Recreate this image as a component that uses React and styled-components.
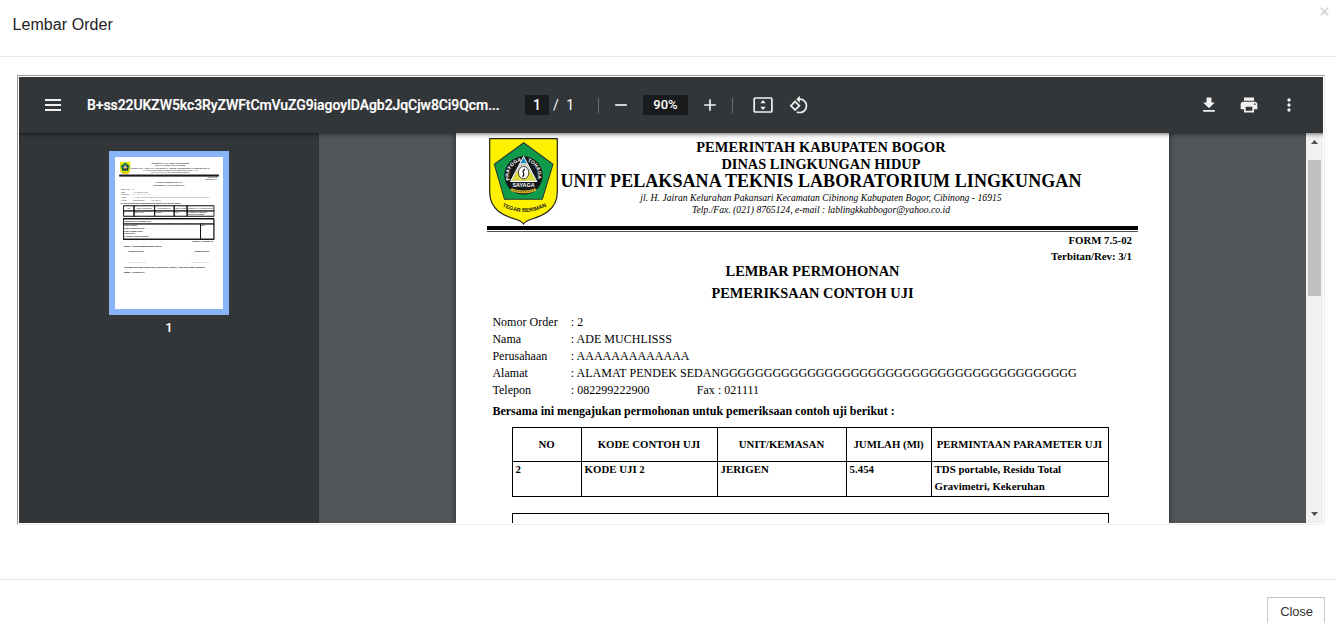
import React from "react";
import styled, { createGlobalStyle, css } from "styled-components";

const GlobalStyle = createGlobalStyle`
  * { box-sizing: border-box; }
  html, body { margin: 0; padding: 0; height: 100%; overflow: hidden; background: #fff; }
  #root { height: 100%; }
`;

/* ---------- modal ---------- */
const Modal = styled.div`
  height: 623px;
  overflow: hidden;
  display: flex;
  flex-direction: column;
  background: #fff;
  font-family: "Liberation Sans", Arial, sans-serif;
`;
const ModalHeader = styled.header`
  flex: none;
  height: 57px;
  border-bottom: 1px solid #eaeaea;
  display: flex;
  justify-content: space-between;
  padding: 0 7px 0 12.6px;
`;
const ModalTitle = styled.h4`
  margin: 0;
  font: 400 16px/49px "Liberation Sans", Arial, sans-serif;
  color: #222;
  letter-spacing: 0.05px;
`;
const Dismiss = styled.button`
  border: 0;
  padding: 0;
  background: none;
  height: 22px;
  line-height: 0;
`;
const ModalBody = styled.main`
  flex: none;
  height: 522px;
  padding: 18px 11px 0 17px;
`;
const Frame = styled.div`
  height: 450px;
  border: 1px solid;
  border-color: #9a9a9a #ededed #ededed #9a9a9a;
  padding: 1px;
  display: flex;
  flex-direction: column;
  background: #fff;
`;
const ModalFooter = styled.footer`
  flex: none;
  height: 60px;
  border-top: 1px solid #e2e2e2;
  padding: 17px 11px 0;
  display: flex;
  justify-content: flex-end;
`;
const CloseButton = styled.button`
  width: 58px;
  height: 34px;
  border: 1px solid #c6c6c6;
  background: #fff;
  color: #333;
  font: 13px/16px "Liberation Sans", Arial, sans-serif;
  padding: 0 0 4px 1px;
  letter-spacing: -0.1px;
`;

/* ---------- viewer toolbar ---------- */
const Toolbar = styled.div`
  flex: none;
  height: 56px;
  background: #323639;
  color: #f1f1f1;
  display: flex;
  align-items: center;
  padding: 0 24px 0 24px;
  font: 500 14px/20px Roboto, sans-serif;
`;
const ToolbarShade = styled.div`
  position: absolute;
  top: 0;
  left: 0;
  right: 0;
  height: 6px;
  background: linear-gradient(rgba(0, 0, 0, 0.38), rgba(0, 0, 0, 0.1) 50%, transparent);
`;
const Icon = styled.svg`
  display: block;
  flex: none;
  width: 20px;
  height: 20px;
  fill: #f1f1f1;
  margin-left: ${(p) => p.$gap || 0}px;
`;
const FileName = styled.span`
  width: 414px;
  margin-left: 24px;
  color: #fff;
  white-space: nowrap;
  font-weight: 500;
  letter-spacing: -0.075px;
  -webkit-text-stroke: 0.2px #fff;
`;
const Field = styled.span`
  width: ${(p) => p.$w}px;
  height: 20px;
  margin-left: ${(p) => p.$gap || 0}px;
  background: #191b1c;
  color: #fff;
  text-align: center;
  font-size: ${(p) => p.$size || 14}px;
`;
const PageTotal = styled.span`
  margin-left: 4px;
  width: 45px;
  font-weight: 400;
  color: #fff;
  word-spacing: 4px;
`;
const Divider = styled.i`
  width: 1px;
  height: 15px;
  margin-left: ${(p) => p.$gap || 0}px;
  background: #6b6e70;
`;
const Spacer = styled.span`
  flex: 1;
`;

/* ---------- viewer panes ---------- */
const Panes = styled.div`
  flex: 1;
  min-height: 0;
  display: flex;
  background: #525659;
  position: relative;
`;
const Sidebar = styled.aside`
  width: 300px;
  background: #323639;
  display: flex;
  flex-direction: column;
  align-items: center;
  padding-top: 18px;
`;
const Thumb = styled.div`
  width: 120px;
  height: 164px;
  border: 6px solid #8ab4f8;
  background: #fff;
  overflow: hidden;
`;
const ThumbScale = styled.div`
  width: 713px;
  height: 1003px;
  transform: scale(0.15147);
  transform-origin: 0 0;
`;
const ThumbLabel = styled.span`
  margin-top: 3px;
  color: #fff;
  font: 500 13px/20px Roboto, sans-serif;
`;
const Viewport = styled.section`
  flex: 1;
  overflow: hidden;
  display: flex;
  justify-content: center;
  align-items: flex-start;
`;
const PageHolder = styled.div`
  margin-top: -26px;
  box-shadow: 0 0 5px 1px rgba(0, 0, 0, 0.4);
`;
const Scrollbar = styled.div`
  width: 17px;
  background: #f1f1f1;
  display: flex;
  flex-direction: column;
  align-items: center;
`;
const Arrow = styled.svg`
  display: block;
  width: 17px;
  height: 17px;
  fill: #505050;
`;
const Track = styled.div`
  flex: 1;
  padding-top: 10px;
`;
const Handle = styled.div`
  width: 13px;
  height: 136px;
  background: #c1c1c1;
`;

/* ---------- document ---------- */
const Paper = styled.article`
  width: 713px;
  height: 1003px;
  background: #fff;
  color: #000;
  padding-top: 31px;
  font: 12px/17px "Liberation Serif", "Times New Roman", serif;
  white-space: nowrap;
`;
const Letterhead = styled.header`
  height: 88px;
  padding-left: 33px;
  display: flex;
`;
const Crest = styled.svg`
  flex: none;
  display: block;
  width: 69px;
  height: 87px;
`;
const Heads = styled.div`
  width: 524px;
  padding-top: 1px;
  margin-left: 1px;
  display: flex;
  flex-direction: column;
  align-items: center;
`;
const Head = styled.div`
  font-size: ${(p) => p.$size}px;
  line-height: ${(p) => p.$lh}px;
  font-weight: ${(p) => (p.$italic ? 400 : 700)};
  font-style: ${(p) => (p.$italic ? "italic" : "normal")};
  letter-spacing: ${(p) => p.$track || 0}px;
  margin-bottom: ${(p) => p.$mb || 0}px;
`;
const Rule = styled.div`
  margin: 0 31px;
  height: 6px;
  border-top: ${(p) => (p.$mini ? 6 : 4)}px solid #000;
  border-bottom: 1px solid #555;
  ${(p) => p.$mini && css`box-shadow: 0 0 0 3px #000;`}
`;
const FormCode = styled.div`
  margin: 0 37px -4px 0;
  padding-top: 0.4px;
  text-align: right;
  font: 700 10.8px/16px "Liberation Serif", serif;
`;
const DocTitle = styled.h1`
  margin: 0;
  text-align: center;
  font: 700 14.4px/22px "Liberation Serif", serif;
`;
const Fields = styled.dl`
  margin: 10px 0 4px 36.4px;
  display: grid;
  grid-template-columns: 78.4px auto;
  grid-auto-rows: 17px;
  letter-spacing: 0.03px;
  dt, dd { margin: 0; }
`;
const Phone = styled.span`
  display: inline-block;
  width: 126px;
`;
const Request = styled.p`
  margin: 0 0 6px 36.4px;
  font-weight: 700;
  height: 18px;
`;
const heavy = css`box-shadow: 0 0 0 3px #000, inset 0 0 0 2.5px #000;`;
const Table = styled.div`
  margin-left: 56px;
  width: 597px;
  display: grid;
  grid-template-columns: 69px 136px 129px 85px 177px;
  border: solid #000;
  border-width: 1px 0 0 1px;
  font: 700 10.8px/17px "Liberation Serif", serif;
  letter-spacing: 0.02px;
`;
const Cell = styled.div`
  border: solid #000;
  border-width: 0 1px 1px 0;
  height: ${(p) => (p.$head ? 34 : 35)}px;
  text-align: ${(p) => (p.$head ? "center" : "left")};
  line-height: ${(p) => (p.$head ? 32 : 17)}px;
  padding: ${(p) => (p.$head ? "0 1px 0 0" : "0 0 0 2.6px")};
  white-space: pre-line;
  ${(p) => p.$mini && heavy}
`;
const CellText = styled.div`
  margin-top: ${(p) => (p.$head ? 0 : -1)}px;
`;
const SampleBox = styled.div`
  margin: 16px 0 0 56px;
  width: 597px;
  border: 1px solid #000;
  font: 700 10.8px/17px "Liberation Serif", serif;
  ${(p) => p.$mini && heavy}
`;
const SampleHead = styled.div`
  height: 34px;
  padding: 9px 3px;
  border-bottom: 1px solid #000;
  ${(p) => p.$mini && heavy}
`;
const SampleBody = styled.div`
  height: 100px;
  display: grid;
  grid-template-columns: 508px 1fr;
`;
const SampleCell = styled.div`
  padding: 4px 3px;
  white-space: pre-line;
  ${(p) => p.$mini && heavy}
`;
const Closing = styled.div`
  padding: 5px 60px 0 58px;
  font-weight: 700;
  font-style: italic;
`;
const ClosingRow = styled.div`
  display: flex;
  justify-content: ${(p) => p.$justify || "flex-start"};
  height: ${(p) => p.$h}px;
  padding: 0 ${(p) => p.$pad || 0}px;
`;

const columns = ["NO", "KODE CONTOH UJI", "UNIT/KEMASAN", "JUMLAH (Ml)", "PERMINTAAN PARAMETER UJI"];
const sample = ["2", "KODE UJI 2", "JERIGEN", "5.454", "TDS portable, Residu Total\nGravimetri, Kekeruhan"];

function BogorCrest({ id }) {
  return (
    <Crest viewBox="0 0 69 87" fontFamily="Liberation Sans" fontWeight="700">
      <defs>
        <path id={id + "top"} d="M20.87 42.46A14.5 14.5 0 1 1 48.13 42.46" />
        <path id={id + "low"} d="M10 66.500Q34.500 81.500 61 66.500" />
      </defs>
      <path d="M.7 .7H68.3V54C68.3 72 53 78 41.500 81.500Q36 83.500 34.500 86Q33 83.500 27.500 81.500C15 78 .7 72 .7 54Z" fill="#fff200" stroke="#222" strokeWidth="1.2" />
      <path d="M34.700 4.700L64 26.300L53.300 61.300H15.500L5.300 26.300Z" fill="#0f9b4a" stroke="#2a3a33" strokeWidth="1.100" />
      <circle cx="34.500" cy="37.500" r="19.200" fill="#15191a" />
      <path d="M34.600 18.500L47.800 43.500H21.400Z" fill="#c9cdc4" stroke="#fff" strokeWidth="1" />
      <path d="M24.500 39.500L28.500 33H40.500L45 39.500L46.500 42.500H22.800Z" fill="#dcdc3c" />
      <path d="M34.600 19.500L37.500 25H31.700Z" fill="#158fd0" />
      <ellipse cx="34.600" cy="34.700" rx="5.200" ry="6.200" fill="#fff" stroke="#222" strokeWidth=".8" />
      <path d="M36 31q-2.800 2-1.600 4q1.200 1.600-.8 3.800" fill="none" stroke="#111" strokeWidth="1.200" />
      <path d="M21 44H48L50 49.500H19Z" fill="#15191a" />
      <path d="M22 51.500Q34.500 56.500 47 51.500" fill="none" stroke="#e0b52c" strokeWidth="2.800" />
      <path d="M24 51.800Q34.500 56 45 51.800" fill="none" stroke="#554a12" strokeWidth="1" strokeDasharray="1.500 1" />
      <text x="34.500" y="49" textAnchor="middle" fontSize="5.400" fill="#fff">SAYAGA</text>
      <text fontSize="5" fill="#fff" textAnchor="middle">
        <textPath href={"#" + id + "top"} startOffset="23.500%">PRAYOGA</textPath>
      </text>
      <text fontSize="5" fill="#fff" textAnchor="middle">
        <textPath href={"#" + id + "top"} startOffset="77%">TOHAGA</textPath>
      </text>
      <text fontSize="5.500" fill="#222" textAnchor="middle">
        <textPath href={"#" + id + "low"} startOffset="50%">TEGAR BERIMAN</textPath>
      </text>
    </Crest>
  );
}

function OrderDocument({ mini }) {
  return (
    <Paper>
      <Letterhead>
        <BogorCrest id={mini ? "m" : "p"} />
        <Heads>
          <Head $size={14.4} $lh={17} $track={0.1}>PEMERINTAH KABUPATEN BOGOR</Head>
          <Head $size={14.4} $lh={16}>DINAS LINGKUNGAN HIDUP</Head>
          <Head $size={18} $lh={18} $mb={1} $track={0.07}>UNIT PELAKSANA TEKNIS LABORATORIUM LINGKUNGAN</Head>
          <Head $size={9.6} $lh={13} $track={0.03} $italic>jl. H. Jairan Kelurahan Pakansari Kecamatan Cibinong Kabupaten Bogor, Cibinong - 16915</Head>
          <Head $size={9.6} $lh={12} $track={0.02} $italic>Telp./Fax. (021) 8765124, e-mail : lablingkkabbogor@yahoo.co.id</Head>
        </Heads>
      </Letterhead>
      <Rule $mini={mini} />
      <FormCode>FORM 7.5-02<br />Terbitan/Rev: 3/1</FormCode>
      <DocTitle>LEMBAR PERMOHONAN<br />PEMERIKSAAN CONTOH UJI</DocTitle>
      <Fields>
        <dt>Nomor Order</dt><dd>: 2</dd>
        <dt>Nama</dt><dd>: ADE MUCHLISSS</dd>
        <dt>Perusahaan</dt><dd>: AAAAAAAAAAAAA</dd>
        <dt>Alamat</dt><dd>: ALAMAT PENDEK SEDAN{"G".repeat(41)}</dd>
        <dt>Telepon</dt><dd><Phone>: 082299222900</Phone>Fax : 021111</dd>
      </Fields>
      <Request>Bersama ini mengajukan permohonan untuk pemeriksaan contoh uji berikut :</Request>
      <Table>
        {columns.map((c) => <Cell key={c} $head $mini={mini}><CellText $head>{c}</CellText></Cell>)}
        {sample.map((c) => <Cell key={c} $mini={mini}><CellText>{c}</CellText></Cell>)}
      </Table>
      <SampleBox $mini={mini}>
        {mini && (
          <>
            <SampleHead $mini>Pengambilan Data Lingkungan (SDK) :</SampleHead>
            <SampleBody>
              <SampleCell $mini>{"Kondisi contoh uji :\nTanggal Pengambilan contoh :\nPetugas Pengambil contoh :\nKeadaan cuaca :\nKeterangan Lapangan yang dilihat :"}</SampleCell>
              <SampleCell $mini>Paraf</SampleCell>
            </SampleBody>
          </>
        )}
        {!mini && <SampleBody />}
      </SampleBox>
      {mini && (
        <Closing>
          <ClosingRow $h={33} $justify="flex-end">Cibinong, 14 Desember 2021</ClosingRow>
          <ClosingRow $h={33}>Catatan : * pernah pelanggan pengirim contoh uji</ClosingRow>
          <ClosingRow $h={64} $justify="space-between" $pad={30}><span>Penerima contoh uji</span><span>Pengirim contoh uji</span></ClosingRow>
          <ClosingRow $h={42} $justify="space-between" $pad={30}><span>____________________</span><span>____________________</span></ClosingRow>
          <ClosingRow $h={34}>Keterangan kontrak pada: Manajer Teknis, Kontrak analis, Contoh uji, Analisa Data, Manajer Administrasi</ClosingRow>
          <ClosingRow $h={20}>Tanggal: 14 Desember 2021</ClosingRow>
        </Closing>
      )}
    </Paper>
  );
}

export default function App() {
  return (
    <Modal>
      <GlobalStyle />
      <ModalHeader>
        <ModalTitle>Lembar Order</ModalTitle>
        <Dismiss aria-label="Tutup">
          <svg width="9" height="9" viewBox="0 0 9 9"><path d="M.8 .8L8.200 8.200M8.200 .8L.8 8.200" stroke="#ccc" strokeWidth="1.500" /></svg>
        </Dismiss>
      </ModalHeader>
      <ModalBody>
        <Frame>
          <Toolbar>
            <Icon viewBox="0 0 20 20"><path d="M2 4h16v2H2zM2 9h16v2H2zM2 14h16v2H2z" /></Icon>
            <FileName>B+ss22UKZW5kc3RyZWFtCmVuZG9iagoyIDAgb2JqCjw8Ci9Qcm...</FileName>
            <Field $w={24} $gap={24}>1</Field>
            <PageTotal>/ 1</PageTotal>
            <Divider />
            <Icon $gap={12} viewBox="0 0 24 24"><path d="M19 13H5v-2h14v2z" /></Icon>
            <Field $w={45} $gap={12} $size={13}>90%</Field>
            <Icon $gap={12} viewBox="0 0 24 24"><path d="M19 13h-6v6h-2v-6H5v-2h6V5h2v6h6v2z" /></Icon>
            <Divider $gap={12} />
            <Icon $gap={20} viewBox="0 0 20 20">
              <rect x="1.200" y="3" width="17.700" height="14" rx="1" fill="none" stroke="#f1f1f1" strokeWidth="1.700" />
              <path d="M10 5L12.700 8.200H7.300zM10 15L12.700 11.800H7.300z" />
            </Icon>
            <Icon $gap={16} viewBox="0 0 24 24"><path d="M7.34 6.41L.86 12.9l6.49 6.48 6.49-6.48-6.5-6.49zM3.69 12.9l3.66-3.66L11 12.9l-3.66 3.66-3.65-3.66zm15.67-6.26A8.95 8.95 0 0 0 13 4V.76L8.76 5 13 9.24V6c1.79 0 3.58.68 4.95 2.05a7.007 7.007 0 0 1 0 9.9 6.973 6.973 0 0 1-7.79 1.44l-1.49 1.49C10.02 21.62 11.51 22 13 22c2.3 0 4.61-.88 6.36-2.64a8.98 8.98 0 0 0 0-12.72z" /></Icon>
            <Spacer />
            <Icon viewBox="0 0 24 24"><path d="M19 9h-4V3H9v6H5l7 7 7-7zM5 18v2h14v-2H5z" /></Icon>
            <Icon $gap={20} viewBox="0 0 24 24"><path d="M19 8H5c-1.66 0-3 1.34-3 3v6h4v4h12v-4h4v-6c0-1.66-1.34-3-3-3zm-3 11H8v-5h8v5zm3-7c-.55 0-1-.45-1-1s.45-1 1-1 1 .45 1 1-.45 1-1 1zm-1-9H6v4h12V3z" /></Icon>
            <Icon $gap={20} viewBox="0 0 24 24"><circle cx="12" cy="6" r="2" /><circle cx="12" cy="12" r="2" /><circle cx="12" cy="18" r="2" /></Icon>
          </Toolbar>
          <Panes>
            <Sidebar>
              <Thumb><ThumbScale><OrderDocument mini /></ThumbScale></Thumb>
              <ThumbLabel>1</ThumbLabel>
            </Sidebar>
            <Viewport>
              <PageHolder><OrderDocument /></PageHolder>
            </Viewport>
            <Scrollbar>
              <Arrow viewBox="0 0 17 17"><path d="M5 11h7L8.500 7z" /></Arrow>
              <Track><Handle /></Track>
              <Arrow viewBox="0 0 17 17"><path d="M5 6h7L8.500 10z" /></Arrow>
            </Scrollbar>
            <ToolbarShade />
          </Panes>
        </Frame>
      </ModalBody>
      <ModalFooter>
        <CloseButton>Close</CloseButton>
      </ModalFooter>
    </Modal>
  );
}
